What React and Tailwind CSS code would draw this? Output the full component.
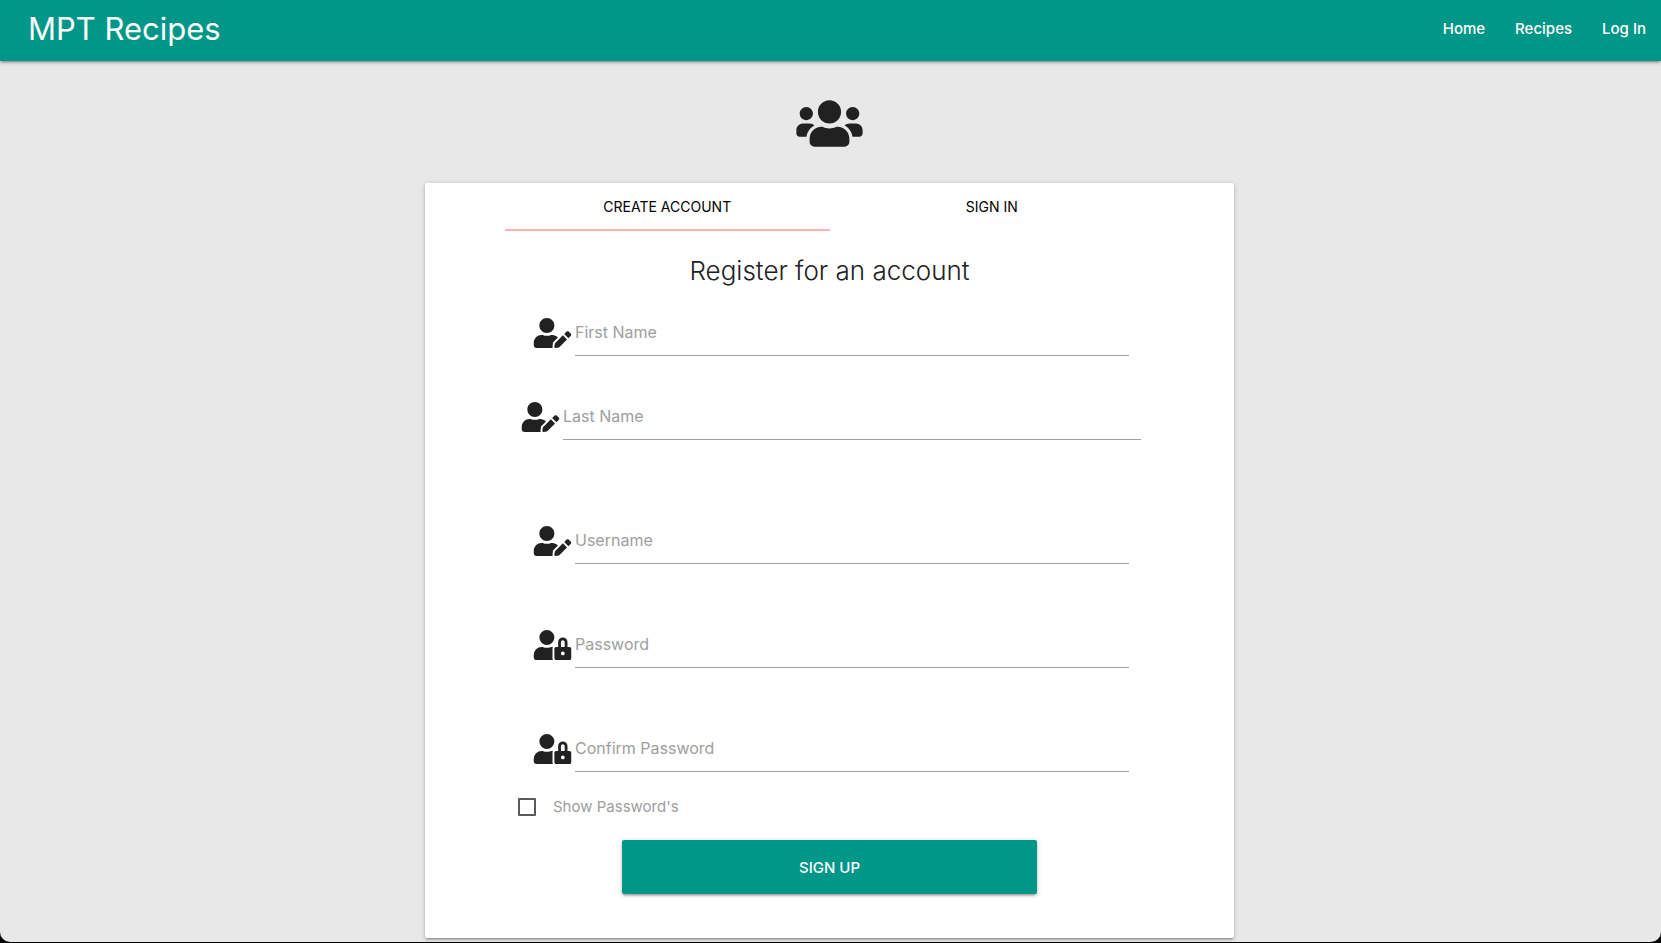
import React, { useState } from "react";
import { FaUsers, FaUserEdit, FaUserLock } from "react-icons/fa";

const raised =
  "shadow-[0_2px_2px_0_rgba(0,0,0,0.14),0_3px_1px_-2px_rgba(0,0,0,0.12),0_1px_5px_0_rgba(0,0,0,0.2)]";

function Field({ id, label, icon: Icon, type = "text", className }) {
  return (
    <div className={`flex h-12 ${className}`}>
      <label htmlFor={id} aria-label={label} className="flex w-[42px] shrink-0 items-center pt-[2px]">
        <Icon className="h-[30px] w-[39px]" aria-hidden="true" />
      </label>
      <input
        id={id}
        type={type}
        placeholder={label}
        className="min-w-0 flex-1 border-b border-[#9e9e9e] bg-transparent text-base outline-none placeholder:text-[#9e9e9e] placeholder:opacity-100 focus:border-[#009688]"
      />
    </div>
  );
}

function Header() {
  return (
    <header className={`relative flex h-[61px] items-center justify-between bg-[#009688] pb-[3px] text-white ${raised}`}>
      <a href="#" className="pl-7 text-[31px] leading-10">
        MPT Recipes
      </a>
      <nav className="flex text-[15px] font-medium">
        <a href="#" className="px-[15px]">Home</a>
        <a href="#recipes" className="px-[15px]">Recipes</a>
        <a href="#login" className="px-[15px]">Log In</a>
      </nav>
    </header>
  );
}

export default function App() {
  const [show, setShow] = useState(false);
  const passwordType = show ? "text" : "password";

  return (
    <div className="min-h-screen bg-black pb-px font-['Inter',sans-serif] text-[#212121]">
      <div className="overflow-hidden rounded-b-[10px] bg-[#e8e8e8] pb-1">
        <Header />
        <main className="flex flex-col items-center pr-[2px] pt-9">
          <FaUsers className="h-[53px] w-[67px]" aria-hidden="true" />
          <section className={`mt-[33px] w-full max-w-[809px] rounded-[2px] bg-white px-20 pb-11 ${raised}`}>
            <div className="grid h-12 grid-cols-2 text-sm text-black">
              <button type="button" className="border-b-2 border-[#f6b2b5] pt-[2px] uppercase">
                Create Account
              </button>
              <button type="button" className="border-b-2 border-transparent pt-[2px] uppercase">
                Sign In
              </button>
            </div>
            <form onSubmit={(e) => e.preventDefault()}>
              <h1 className="mb-[17px] mt-5 text-center text-[26px] leading-10 font-light">
                Register for an account
              </h1>
              <Field id="first" label="First Name" icon={FaUserEdit} className="ml-7 mr-[25px]" />
              <Field id="last" label="Last Name" icon={FaUserEdit} className="ml-4 mr-[13px] mt-9" />
              <Field id="username" label="Username" icon={FaUserEdit} className="ml-7 mr-[25px] mt-19" />
              <Field id="password" label="Password" icon={FaUserLock} type={passwordType} className="ml-7 mr-[25px] mt-14" />
              <Field id="confirm" label="Confirm Password" icon={FaUserLock} type={passwordType} className="ml-7 mr-[25px] mt-14" />
              <label className="ml-[13px] mt-[23px] flex h-6 w-fit items-center gap-[17px] text-[15px] text-[#9e9e9e]">
                <input
                  type="checkbox"
                  checked={show}
                  onChange={(e) => setShow(e.target.checked)}
                  className="h-[18px] w-[18px] appearance-none rounded-[1px] border-2 border-[#5a5a5a] checked:bg-[#009688]"
                />
                Show Password's
              </label>
              <button
                type="submit"
                className={`mx-auto mt-[21px] block h-[54px] w-[415px] max-w-full rounded-[2px] bg-[#009688] pt-[2px] text-[15px] font-medium uppercase text-white ${raised}`}
              >
                Sign Up
              </button>
            </form>
          </section>
        </main>
      </div>
    </div>
  );
}
